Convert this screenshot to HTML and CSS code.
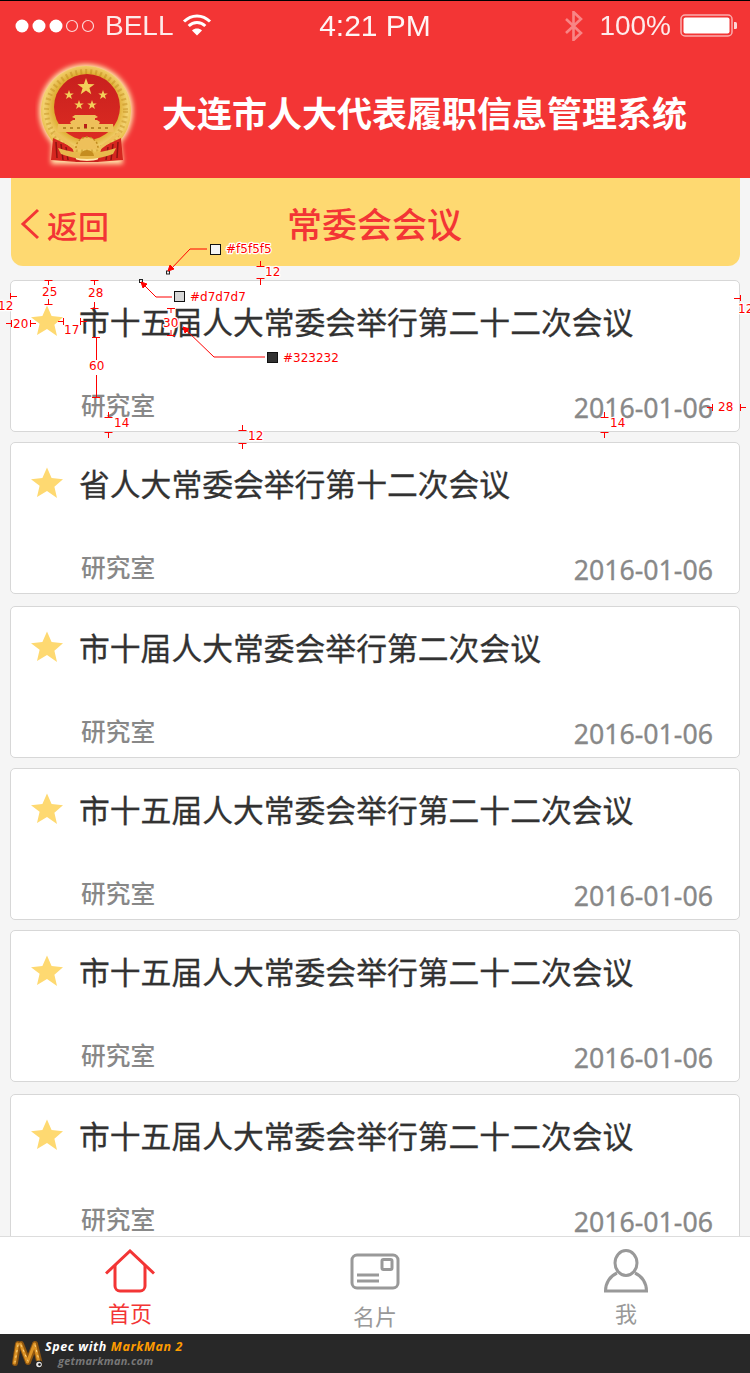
FILE: index.html
```html
<!DOCTYPE html>
<html lang="zh-CN">
<head>
<meta charset="utf-8">
<title>常委会会议</title>
<link rel="stylesheet" href="styles.css">
</head>
<body>
<svg class="defs" width="0" height="0" aria-hidden="true">
  <defs>
    <symbol id="star" viewBox="0 0 32 32"><path d="M16 0.5l4.6 10.6 11.4 1.1-8.6 7.6 2.6 11.2L16 24.1 6 30l2.600-11.200L0 12.200l11.400-1.100z"/></symbol>
    <symbol id="gold-star" viewBox="-10 -10 20 20"><path d="M0-10L2.350-3.240 9.510-3.090 3.800 1.240 5.880 8.090 0 4 -5.880 8.090-3.800 1.240-9.510-3.090-2.350-3.240z"/></symbol>
  </defs>
</svg>
<div class="phone">
  <header class="head">
    <div class="status">
      <div class="status-left">
        <svg class="signal" width="82" height="16" viewBox="0 0 82 16">
          <circle cx="7" cy="8" r="6.500" fill="#fff"/><circle cx="24" cy="8" r="6.500" fill="#fff"/><circle cx="41" cy="8" r="6.500" fill="#fff"/>
          <circle cx="57" cy="8" r="5.500" fill="none" stroke="#fff" stroke-opacity=".8" stroke-width="1.200"/><circle cx="73" cy="8" r="5.500" fill="none" stroke="#fff" stroke-opacity=".8" stroke-width="1.200"/>
        </svg>
        <span class="carrier">BELL</span>
        <svg class="wifi" width="30" height="24" viewBox="0 0 30 24" fill="none" stroke="#fff" stroke-width="3">
          <path d="M2 9.500C9.500 2 20.500 2 28 9.500"/><path d="M6.700 14C11.500 9.300 18.500 9.300 23.300 14"/><path d="M15 23.500l-5-5c3-2.600 7-2.600 10 0z" fill="#fff" stroke="none"/>
        </svg>
      </div>
      <div class="clock">4:21 PM</div>
      <div class="status-right">
        <svg class="bt" width="18" height="30" viewBox="0 0 18 30" fill="none" stroke="#fff" stroke-opacity=".4" stroke-width="2.600"><path d="M1 8l15 14-7.500 7V1L16 8 1 22"/></svg>
        <span class="pct">100%</span>
        <svg class="battery" width="57" height="24" viewBox="0 0 57 24"><rect x="1" y="1" width="51" height="21" rx="4" fill="none" stroke="#fff" stroke-opacity=".6" stroke-width="1.500"/><rect x="3.500" y="3.500" width="46" height="16" rx="2" fill="#fff"/><path d="M54 8h1.500a1.500 1.500 0 0 1 1.500 1.500v4a1.500 1.500 0 0 1-1.500 1.500H54z" fill="#fff" fill-opacity=".8"/></svg>
      </div>
    </div>
    <div class="brand">
      <svg class="emblem" width="105" height="110" viewBox="35 60 105 110">
        <defs>
          <filter id="glow" x="-20%" y="-20%" width="140%" height="140%"><feGaussianBlur stdDeviation="2.500"/></filter>
          <radialGradient id="gold" cx="50%" cy="45%" r="55%"><stop offset=".6" stop-color="#d9a21f"/><stop offset=".85" stop-color="#f3d271"/><stop offset="1" stop-color="#e6b63c"/></radialGradient>
          <linearGradient id="disc" x1="0" y1="0" x2="0" y2="1"><stop offset="0" stop-color="#c8201e"/><stop offset="1" stop-color="#dc2b22"/></linearGradient>
        </defs>
        <g filter="url(#glow)" fill="#ffeeb0">
          <circle cx="86" cy="111" r="47"/><path d="M52 138h68l3 26H51z"/>
        </g>
        <circle cx="86" cy="111" r="45" fill="url(#gold)"/>
        <circle cx="86" cy="111" r="39.500" fill="none" stroke="#b98314" stroke-width="5" stroke-dasharray="2 3" opacity=".4"/>
        <circle cx="87" cy="107" r="33" fill="url(#disc)"/>
        <g fill="#f3cf5a">
          <use href="#gold-star" x="77" y="78" width="18" height="18"/>
          <use href="#gold-star" x="64" y="90" width="10" height="10"/>
          <use href="#gold-star" x="98" y="90" width="10" height="10"/>
          <use href="#gold-star" x="74" y="100" width="10" height="10"/>
          <use href="#gold-star" x="87" y="100" width="10" height="10"/>
        </g>
        <g fill="#eec05a">
          <path d="M72 117l3-2h20l3 2-2 1H74z"/>
          <rect x="75" y="118" width="20" height="2"/>
          <path d="M70 122l3-2h24l3 2-1 2H71z"/>
          <path d="M58 124h55l1 8H57z"/>
        </g>
        <path d="M63 128h46" stroke="#a8741a" stroke-width="1.500" stroke-dasharray="3 4"/>
        <path d="M84 124h3v4h-3z" fill="#b92019"/>
        <path d="M53 138l19 9 5 15-26-2z" fill="#d5261f"/>
        <path d="M121 138l-19 9-5 15 26-2z" fill="#d5261f"/>
        <path d="M56 142l1 16M61 144l2 16M66 147l2 13M118 142l-1 16M113 144l-2 16M108 147l-2 13" stroke="#8c1411" stroke-width="1.500"/>
        <path d="M54 133l20 15h26l20-15" fill="none" stroke="#eec05a" stroke-width="3"/>
        <path d="M76 148a11 11 0 0 1 22 0z" fill="#eec05a"/>
        <path d="M76 148a11 11 0 0 1 22 0" fill="none" stroke="#c08a1e" stroke-width="1.500" stroke-dasharray="2 2"/>
        <path d="M58 148Q87 158 116 148l-3 6Q87 164 61 154z" fill="#e8b94c"/>
        <path d="M80 156a7 6 0 0 1 14 0z" fill="#c58d1f"/>
        <path d="M74 159q13 4 26 0l-2 3H76z" fill="#c9201c"/>
      </svg>
      <h1 class="sys-title">大连市人大代表履职信息管理系统</h1>
    </div>
  </header>

  <nav class="subnav">
    <a class="back">
      <svg class="chev" width="20" height="32" viewBox="0 0 20 32" fill="none" stroke="#f33535" stroke-width="3"><path d="M18 2L3 16l15 14"/></svg>
      <span>返回</span>
    </a>
    <h2 class="page-title">常委会会议</h2>
  </nav>

  <main class="list">
    <article class="card">
      <div class="row"><svg class="star"><use href="#star"/></svg><h3 class="t">市十五届人大常委会举行第二十二次会议</h3></div>
      <div class="meta"><span class="dept">研究室</span><span class="date">2016-01-06</span></div>
    </article>
    <article class="card gap-s">
      <div class="row"><svg class="star"><use href="#star"/></svg><h3 class="t">省人大常委会举行第十二次会议</h3></div>
      <div class="meta"><span class="dept">研究室</span><span class="date">2016-01-06</span></div>
    </article>
    <article class="card">
      <div class="row"><svg class="star"><use href="#star"/></svg><h3 class="t">市十届人大常委会举行第二次会议</h3></div>
      <div class="meta"><span class="dept">研究室</span><span class="date">2016-01-06</span></div>
    </article>
    <article class="card gap-s">
      <div class="row"><svg class="star"><use href="#star"/></svg><h3 class="t">市十五届人大常委会举行第二十二次会议</h3></div>
      <div class="meta"><span class="dept">研究室</span><span class="date">2016-01-06</span></div>
    </article>
    <article class="card gap-s">
      <div class="row"><svg class="star"><use href="#star"/></svg><h3 class="t">市十五届人大常委会举行第二十二次会议</h3></div>
      <div class="meta"><span class="dept">研究室</span><span class="date">2016-01-06</span></div>
    </article>
    <article class="card">
      <div class="row"><svg class="star"><use href="#star"/></svg><h3 class="t">市十五届人大常委会举行第二十二次会议</h3></div>
      <div class="meta"><span class="dept">研究室</span><span class="date">2016-01-06</span></div>
    </article>
  </main>

  <footer class="tabs">
    <a class="tab active">
      <svg class="tab-icon" width="50" height="44" viewBox="0 0 50 44" fill="none" stroke="#f33535" stroke-width="3"><path d="M1 24.500L25 2l24 22.500"/><path d="M10 16v21a5 5 0 0 0 5 5h20a5 5 0 0 0 5-5V16"/></svg>
      <span>首页</span>
    </a>
    <a class="tab card-tab">
      <svg class="tab-icon" width="50" height="38" viewBox="0 0 50 38" fill="none" stroke="#999" stroke-width="3"><rect x="2" y="2" width="46" height="33" rx="5"/><rect x="32" y="6.500" width="10" height="10" rx="1.500"/><path d="M7 22h22M7 28h22"/></svg>
      <span>名片</span>
    </a>
    <a class="tab">
      <svg class="tab-icon" width="44" height="44" viewBox="0 0 44 44" fill="none" stroke="#999" stroke-width="3"><ellipse cx="22" cy="14" rx="11" ry="12.500"/><path d="M13 24C6 27 1.500 34 1.500 42h41c0-8-4.500-15-11.500-18"/></svg>
      <span>我</span>
    </a>
  </footer>

  <div class="mm-bar">
    <svg class="mm-logo" width="32" height="32" viewBox="0 0 32 32">
      <g fill="none" stroke-linecap="round">
        <path d="M6 6L3 25M9 6l7 18M23 6l-7 18M23 6l5 21" stroke="#8d5510" stroke-width="6"/>
        <path d="M5.500 6L2.500 25M8.500 6l7 18M22.500 6l-7 18M22.500 6l5 21" stroke="#dd9426" stroke-width="3"/>
        <path d="M6 7L3 24M9 7l7 16M23 7l5 19" stroke="#ffd98a" stroke-width="1" stroke-dasharray="1.500 4"/>
      </g>
      <circle cx="27" cy="26.500" r="4" fill="#222"/><circle cx="27" cy="26.500" r="2.800" fill="#e6e6e6"/><circle cx="27.500" cy="26.500" r="1.300" fill="#111"/>
    </svg>
    <div class="mm-text">
      <div class="mm-spec">Spec with <b>MarkMan 2</b></div>
      <div class="mm-url">getmarkman.com</div>
    </div>
  </div>

  <svg class="marks" width="750" height="1373" viewBox="0 0 750 1373" fill="none" stroke="#f00" stroke-width="1">
    <rect x="166.500" y="271" width="3" height="3" stroke="#222"/>
    <path d="M170 270l20-21h17"/><path d="M168 271l6-2-4-4z" fill="#f00"/>
    <rect x="210.500" y="244.500" width="10" height="10" fill="#f5f5f5" stroke="#111"/>
    <rect x="139.500" y="279.500" width="3" height="3" stroke="#222"/>
    <path d="M143 284l13 13h16"/><path d="M141 282l6 2-4 4z" fill="#f00"/>
    <rect x="174.500" y="291.500" width="10" height="10" fill="#d7d7d7" stroke="#111"/>
    <path d="M185 329l29 28h51"/><path d="M183 327l6 2-4 4z" fill="#f00"/>
    <rect x="267.500" y="352.500" width="10" height="10" fill="#323232" stroke="#111"/>

    <path d="M256.500 266.500h8M260.500 261v5M256.500 278.500h8M260.500 279v6"/>
    <path d="M44.500 280.500h8M48.500 280v5M44.500 304.500h8M48.500 299v5"/>
    <path d="M90.500 280.500h8M94.500 280v5M90.500 308.500h8M94.500 302v6"/>
    <path d="M10.500 293v6M10 296.500h7"/>
    <path d="M11.500 320v7M6 323.500h5M30.500 320v7M31 323.500h5"/>
    <path d="M63.500 318v7M58 321.500h5M80.500 318v7M81 321.500h6"/>
    <path d="M167 308.500h8M171 308v5M167 335.500h8M171 330v5"/>
    <path d="M92 337.500h8M96.500 338v22M96.500 375v22M92 397.500h8"/>
    <path d="M104.500 417.500h8M108.500 412v5M104.500 432.500h8M108.500 433v5"/>
    <path d="M238.500 430.500h8M242.500 425v5M238.500 443.500h8M242.500 444v5"/>
    <path d="M600.500 417.500h8M604.500 412v5M600.500 432.500h8M604.500 433v5"/>
    <path d="M712.500 404v7M707 407.500h5M740.500 404v7M741 407.500h5"/>
    <path d="M740.500 295v6M734 298.500h6"/>

    <g class="mark-text">
      <text x="226" y="253">#f5f5f5</text>
      <text x="190" y="301">#d7d7d7</text>
      <text x="283" y="362">#323232</text>
      <text x="265" y="276">12</text>
      <text x="42" y="296">25</text>
      <text x="88" y="297">28</text>
      <text x="-2" y="310">12</text>
      <text x="13" y="328">20</text>
      <text x="64" y="334">17</text>
      <text x="163" y="327">30</text>
      <text x="89" y="370">60</text>
      <text x="114" y="427">14</text>
      <text x="248" y="440">12</text>
      <text x="610" y="427">14</text>
      <text x="718" y="411">28</text>
      <text x="738" y="313">12</text>
    </g>
  </svg>
</div>
</body>
</html>
```

FILE: styles.css
```css
* { box-sizing: border-box; margin: 0; padding: 0; }
html, body { width: 750px; height: 1373px; overflow: hidden; }
body { background: #f5f5f5; font-family: "Noto Sans", "Noto Sans CJK SC", sans-serif; }
.defs { position: absolute; }
.phone { position: relative; width: 750px; height: 1373px; display: flex; flex-direction: column; overflow: hidden; }

.head { height: 178px; flex: none; background: #f33535; border-top: 1px solid #000; color: #fff; }
.status { height: 59px; display: grid; grid-template-columns: 1fr auto 1fr; align-items: center; padding: 0 13px 10px 15px; font-family: "Liberation Sans", Arial, sans-serif; font-size: 28px; }
.status-left { display: flex; align-items: center; }
.carrier { margin-left: 8px; color: #fff; opacity: .9; }
.wifi { margin-left: 8px; margin-bottom: 4px; }
.clock { font-size: 30px; opacity: .95; margin-left: -2px; }
.status-right { display: flex; align-items: center; justify-content: flex-end; }
.bt { margin-right: 16px; }
.pct { opacity: .9; margin-right: 9px; }

.brand { display: flex; align-items: center; height: 118px; padding-left: 35px; }
.emblem { flex: none; margin-bottom: 8px; }
.sys-title { margin-left: 22px; margin-bottom: 14px; font-family: "Noto Sans CJK SC", sans-serif; font-size: 35px; font-weight: 700; line-height: 46px; }

.subnav { position: relative; flex: none; height: 88px; margin: 0 10px 0 11px; background: #fed971; border-radius: 0 0 12px 12px; display: flex; align-items: center; justify-content: center; font-family: "Noto Sans CJK SC", sans-serif; color: #f33535; }
.back { position: absolute; left: 9px; top: 4px; bottom: 0; display: flex; align-items: center; font-size: 31px; font-weight: 500; }
.back span { margin-left: 7px; }
.chev { flex: none; }
.page-title { font-size: 35px; font-weight: 500; line-height: 50px; margin: 1px 2px 0 0; }

.list { flex: 1; min-height: 0; overflow: hidden; padding: 14px 10px 0; display: flex; flex-direction: column; gap: 12px; font-family: "Noto Sans CJK SC", sans-serif; }
.card { flex: none; height: 152px; background: #fff; border: 1px solid #d7d7d7; border-radius: 5px; display: flex; flex-direction: column; justify-content: space-between; padding: 17px 26px 5px 20px; }
.gap-s { margin-top: -2px; }
.row { display: flex; align-items: flex-start; }
.star { flex: none; width: 32px; height: 32px; margin-top: 7px; fill: #fed971; }
.t { margin-left: 16px; font-size: 30.800px; font-weight: 400; line-height: 46px; color: #323232; white-space: nowrap; -webkit-text-stroke: .3px #323232; }
.meta { display: flex; justify-content: space-between; align-items: flex-end; padding-left: 50px; color: #888; }
.dept { font-size: 24.700px; font-weight: 500; line-height: 36px; margin-bottom: 4px; }
.date { font-family: "Noto Sans", "Open Sans", sans-serif; font-size: 26.700px; font-weight: 400; line-height: 36px; -webkit-text-stroke: .3px #888; }

.tabs { flex: none; height: 98px; background: #fff; border-top: 1px solid #ddd; display: grid; grid-template-columns: 1fr 1fr 1fr; font-family: "Noto Sans CJK SC", sans-serif; font-size: 22px; color: #999; }
.tab { display: flex; flex-direction: column; align-items: center; padding-top: 12px; }
.tab span { line-height: 32px; margin-top: 3px; }
.tab.active { color: #f33535; margin-left: 10px; }
.card-tab { padding-top: 16px; }
.card-tab span { margin-top: 8px; }
.tab:last-child { margin-left: 1px; margin-right: -1px; }

.mm-bar { flex: none; height: 39px; background: #282828; display: flex; align-items: center; padding-left: 12px; }
.mm-logo { flex: none; }
.mm-text { margin-left: 1px; font-family: "Open Sans", sans-serif; font-style: italic; font-weight: 700; }
.mm-spec { font-size: 12.500px; line-height: 15px; letter-spacing: .6px; color: #fff; margin-top: -2px; }
.mm-spec b { color: #ff9c00; font-weight: 700; }
.mm-url { font-size: 11px; line-height: 13px; letter-spacing: .25px; color: #777; margin-left: 13px; }

.marks { position: absolute; left: 0; top: 0; pointer-events: none; }
.mark-text text { font-family: "DejaVu Sans", sans-serif; font-size: 12px; fill: #f00; stroke: #fff; stroke-width: 2.500px; paint-order: stroke; stroke-linejoin: round; }
```
